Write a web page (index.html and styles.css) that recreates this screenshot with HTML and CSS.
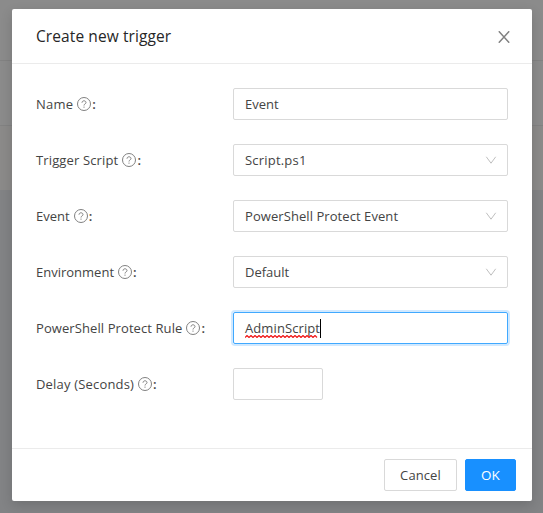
FILE: index.html
```html
<!DOCTYPE html>
<html lang="en">
<head>
<meta charset="utf-8">
<title>Create new trigger</title>
<link rel="stylesheet" href="styles.css">
</head>
<body>
<svg width="0" height="0" class="defs">
  <symbol id="help" viewBox="0 0 14 14"><circle cx="7" cy="7" r="6.5" fill="none" stroke="currentColor"/><path d="M5 5.7C5 4.5 5.9 3.8 7 3.8s2 .7 2 1.8C9 6.9 7 6.9 7 8.5" fill="none" stroke="currentColor"/><circle cx="7" cy="10.1" r=".7" fill="currentColor"/></symbol>
  <symbol id="down" viewBox="0 0 12 12"><path d="M1.3 2.8L6 9.2l4.7-6.4" fill="none" stroke="currentColor"/></symbol>
</svg>
<div class="page">
  <div class="bar"></div>
  <div class="tabs"></div>
  <div class="notice"></div>
</div>
<div class="modal">
  <header class="head"><h1 class="title">Create new trigger</h1>
    <svg class="close" viewBox="0 0 12 12"><path d="M.8.3l10.4 11.4M11.2.3L.8 11.7" fill="none" stroke="currentColor" stroke-width="1.5"/></svg>
  </header>
  <main class="body">
    <div class="row"><label class="label"><span class="t-name">Name</span><svg class="help"><use href="#help"/></svg><b>:</b></label><div class="field"><span>Event</span></div></div>
    <div class="row"><label class="label"><span class="t-script">Trigger Script</span><svg class="help"><use href="#help"/></svg><b>:</b></label><div class="field"><span class="v-script">Script.ps1</span><svg class="down"><use href="#down"/></svg></div></div>
    <div class="row"><label class="label"><span>Event</span><svg class="help"><use href="#help"/></svg><b>:</b></label><div class="field"><span class="v-protect">PowerShell Protect Event</span><svg class="down"><use href="#down"/></svg></div></div>
    <div class="row"><label class="label"><span>Environment</span><svg class="help"><use href="#help"/></svg><b>:</b></label><div class="field"><span>Default</span><svg class="down"><use href="#down"/></svg></div></div>
    <div class="row"><label class="label"><span class="t-rule">PowerShell Protect Rule</span><svg class="help"><use href="#help"/></svg><b>:</b></label><div class="field focus"><span class="v-admin">AdminScript<svg class="wave" viewBox="0 0 76 3"><path d="M0 2.5L2 .5l2 2 2-2 2 2 2-2 2 2 2-2 2 2 2-2 2 2 2-2 2 2 2-2 2 2 2-2 2 2 2-2 2 2 2-2 2 2 2-2 2 2 2-2 2 2 2-2 2 2 2-2 2 2 2-2 2 2 2-2 2 2 2-2 2 2 2-2 2 2" fill="none" stroke="#f01818" stroke-width="1.2"/></svg></span><i class="caret"></i></div></div>
    <div class="row"><label class="label"><span class="t-delay">Delay (Seconds)</span><svg class="help"><use href="#help"/></svg><b>:</b></label><div class="field short"></div></div>
  </main>
  <footer class="foot"><button class="btn">Cancel</button><button class="btn primary">OK</button></footer>
</div>
</body>
</html>
```
FILE: styles.css
```css
* { box-sizing: border-box; }
body { margin: 0; height: 513px; overflow: hidden; background: #828385; font-family: "Open Sans", "Noto Sans", sans-serif; font-size: 13px; color: #444; }
.defs { position: absolute; }
.page { height: 513px; }
.bar { height: 61px; background: #8b8b8b; border-bottom: 1px solid #828282; }
.tabs { height: 65px; background: #8b8b8b; border-bottom: 1px solid #828282; }
.notice { height: 64px; background: #8b8a89; }
.modal { position: absolute; left: 12px; top: 9px; width: 520px; height: 492px; background: #fff; border-radius: 2px; box-shadow: 0 4px 12px rgba(0,0,0,.15); display: flex; flex-direction: column; }
.head { height: 55px; padding: 0 22px 0 24px; border-bottom: 1px solid #ebebeb; display: flex; align-items: center; justify-content: space-between; }
.title { margin: 0; font-size: 15.5px; letter-spacing: .09px; font-weight: 400; line-height: 22px; color: #262626; }
.close { width: 12px; height: 12px; color: #808080; margin-top: 2px; }
.body { flex: 1; padding: 24px; display: flex; flex-direction: column; gap: 24px; }
.row { display: flex; height: 32px; }
.label { width: 197px; display: flex; align-items: center; white-space: nowrap; }
.label b { font-weight: 600; margin-left: 1px; }
.t-name { letter-spacing: .25px; }
.t-script { letter-spacing: .14px; }
.t-rule { letter-spacing: .09px; }
.t-delay { letter-spacing: .18px; }
.help { width: 14px; height: 14px; margin-left: 4px; color: #808080; }
.field { width: 275px; height: 32px; border: 1px solid #d9d9d9; border-radius: 2px; padding: 0 10px 0 11px; display: flex; align-items: center; white-space: nowrap; }
.v-script { letter-spacing: .2px; }
.v-protect { letter-spacing: .07px; }
.v-admin { position: relative; letter-spacing: .1px; }
.wave { position: absolute; left: 0; bottom: -1px; width: 76px; height: 3px; }
.down { width: 12px; height: 12px; color: #bfbfbf; margin-left: auto; }
.short { width: 90px; }
.focus { border-color: #40a9ff; box-shadow: 0 0 0 2px rgba(24,144,255,.2); }
.caret { width: 1px; height: 19px; background: #000; }
.foot { height: 53px; padding: 10px 16px; border-top: 1px solid #ebebeb; display: flex; justify-content: flex-end; gap: 8px; }
.btn { width: 73px; height: 32px; padding: 0; border: 1px solid #d9d9d9; border-radius: 2px; background: #fff; color: #444; font: inherit; letter-spacing: .1px; }
.primary { width: 51px; background: #1890ff; border-color: #1890ff; color: #fff; font-size: 13.5px; }
```
